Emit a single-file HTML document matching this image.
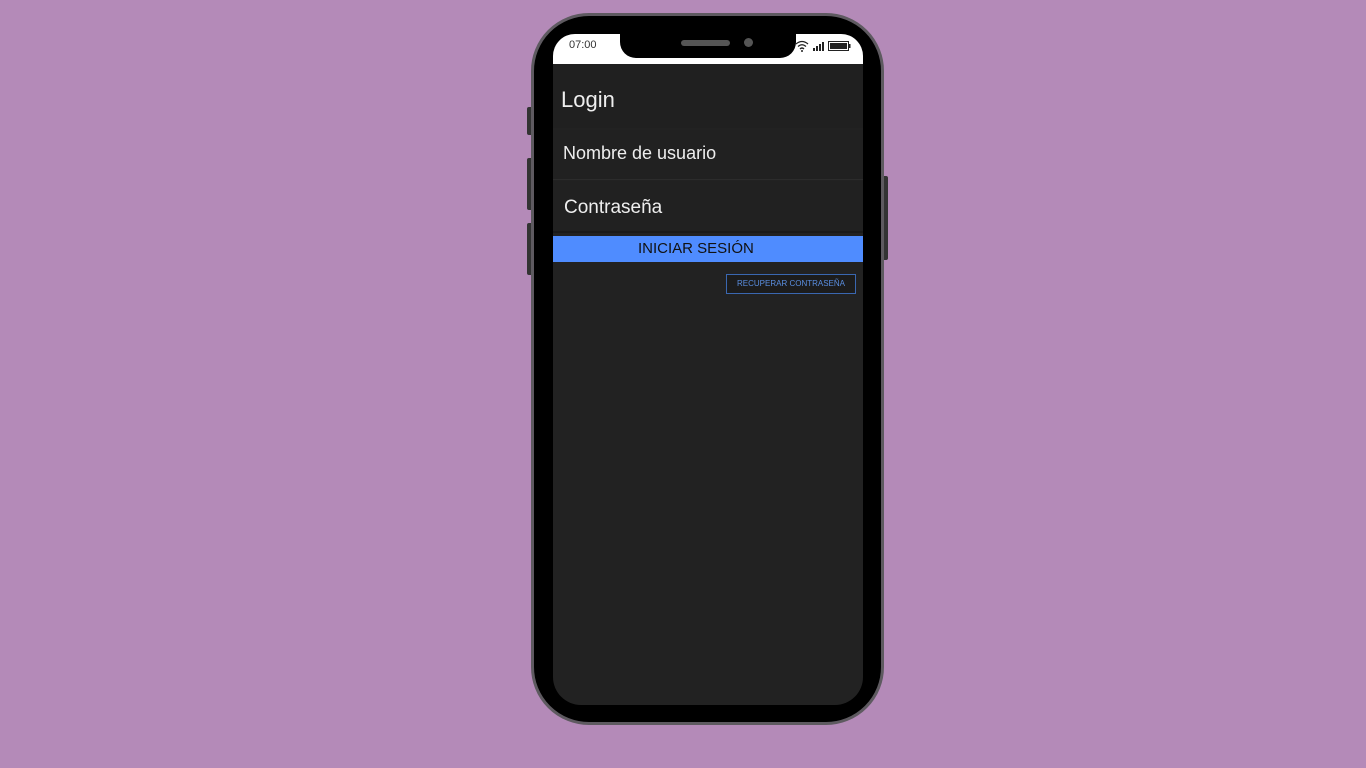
<!DOCTYPE html>
<html><head><style>
body{margin:0;width:1366px;height:768px;background:#b48ab8;position:relative;overflow:hidden;font-family:"Liberation Sans",sans-serif}
.sb{position:absolute;background:#333;border-radius:2px}
.phone{position:absolute;left:531px;top:13px;width:347px;height:706px;border:3px solid #5e5a60;border-radius:58px;background:#000}
.screen{position:absolute;left:553px;top:34px;width:310px;height:671px;background:#222;border-radius:22px 22px 28px 28px;overflow:hidden}
.status{position:absolute;left:0;top:0;width:310px;height:30px;background:#fff}
.notch{position:absolute;left:67px;top:0;width:176px;height:24px;background:#000;border-radius:0 0 16px 16px}
</style></head><body>
<div class="sb" style="left:527px;top:107px;width:6px;height:28px"></div>
<div class="sb" style="left:527px;top:158px;width:6px;height:52px"></div>
<div class="sb" style="left:527px;top:223px;width:6px;height:52px"></div>
<div class="sb" style="left:882px;top:176px;width:6px;height:84px"></div>
<div class="phone"></div>
<div class="screen">
 <div class="status"></div>
 <div style="position:absolute;left:16px;top:5px;font-size:11px;color:#333">07:00</div>
 <div class="notch"><div style="position:absolute;left:61px;top:6px;width:49px;height:6px;border-radius:3px;background:#555"></div><div style="position:absolute;left:124px;top:4px;width:9px;height:9px;border-radius:50%;background:#555"></div></div>
 <svg style="position:absolute;left:242px;top:5px" width="60" height="14" viewBox="0 0 60 14">
  <path d="M1 5 Q7 0 13 5 M3 7.5 Q7 4 11 7.5 M5 10 Q7 8 9 10" stroke="#222" stroke-width="1.3" fill="none"/><circle cx="7" cy="12" r="1" fill="#222"/>
  <rect x="18" y="9" width="2" height="3" fill="#222"/><rect x="21" y="7" width="2" height="5" fill="#222"/><rect x="24" y="5" width="2" height="7" fill="#222"/><rect x="27" y="3" width="2" height="9" fill="#222"/>
  <rect x="33.5" y="2.5" width="20" height="9" fill="none" stroke="#222"/><rect x="35" y="4" width="17" height="6" fill="#222"/><rect x="54" y="5" width="1.5" height="4" fill="#222"/>
 </svg>
 <div style="position:absolute;left:0;top:30px;width:310px;height:64px;background:#202020"></div>
 <div style="position:absolute;left:8px;top:53px;font-size:22px;color:#eee">Login</div>
 <div style="position:absolute;left:0;top:96px;width:310px;height:49px;background:#212121;border-bottom:1px solid #2c2c2c"></div>
 <div style="position:absolute;left:10px;top:109px;font-size:18px;color:#eee">Nombre de usuario</div>
 <div style="position:absolute;left:0;top:147px;width:310px;height:50px;background:#212121;border-bottom:2px solid #1a1a1a"></div>
 <div style="position:absolute;left:11px;top:163px;font-size:19px;color:#eee">Contraseña</div>
 <div style="position:absolute;left:0;top:202px;width:310px;height:26px;background:#4f8cff;color:#111;font-size:15px;line-height:26px;text-indent:85px">INICIAR SESIÓN</div>
 <div style="position:absolute;left:173px;top:240px;width:128px;height:18px;border:1px solid #3a67b0;background:#1c1c1c;color:#5a8ee0;font-size:8px;line-height:18px;text-align:center">RECUPERAR CONTRASEÑA</div>
</div>
</body></html>
